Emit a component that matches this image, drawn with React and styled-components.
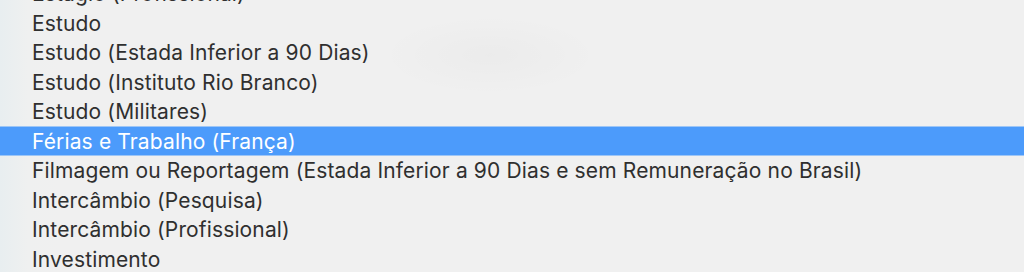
import React from 'react';
import styled, { createGlobalStyle } from 'styled-components';

const GlobalStyle = createGlobalStyle`
  html, body {
    margin: 0;
    padding: 0;
    background: #f0f0f0;
  }
  body {
    font-family: Inter, "Noto Sans", "Liberation Sans", sans-serif;
    -webkit-font-smoothing: antialiased;
  }
`;

const options = [
  'Estágio (Profissional)',
  'Estudo',
  'Estudo (Estada Inferior a 90 Dias)',
  'Estudo (Instituto Rio Branco)',
  'Estudo (Militares)',
  'Férias e Trabalho (França)',
  'Filmagem ou Reportagem (Estada Inferior a 90 Dias e sem Remuneração no Brasil)',
  'Intercâmbio (Pesquisa)',
  'Intercâmbio (Profissional)',
  'Investimento',
];

const SELECTED = 'Férias e Trabalho (França)';

const Menu = styled.div`
  width: 1024px;
  height: 272px;
  overflow: hidden;
  background:
    radial-gradient(ellipse 110px 40px at 490px 55px, rgba(0, 0, 0, 0.018), rgba(0, 0, 0, 0) 100%),
    linear-gradient(90deg, #e8eef0 0px, #eff0f0 28px, #f0f0f0 60px);
`;

const List = styled.ul`
  list-style: none;
  margin: 0;
  padding: 0;
  transform: translateY(-21.5px);
`;

const Option = styled.li`
  height: 29.5px;
  display: flex;
  align-items: center;
  padding-left: 32px;
  font-size: 21px;
  letter-spacing: 0.14px;
  white-space: nowrap;
  color: ${(p) => (p.selected ? '#ffffff' : '#2f2f2f')};
  background: ${(p) => (p.selected ? '#4c9bfb' : 'transparent')};
`;

export default function App() {
  return (
    <>
      <GlobalStyle />
      <Menu>
        <List>
          {options.map((o) => (
            <Option key={o} selected={o === SELECTED}>
              {o}
            </Option>
          ))}
        </List>
      </Menu>
    </>
  );
}
